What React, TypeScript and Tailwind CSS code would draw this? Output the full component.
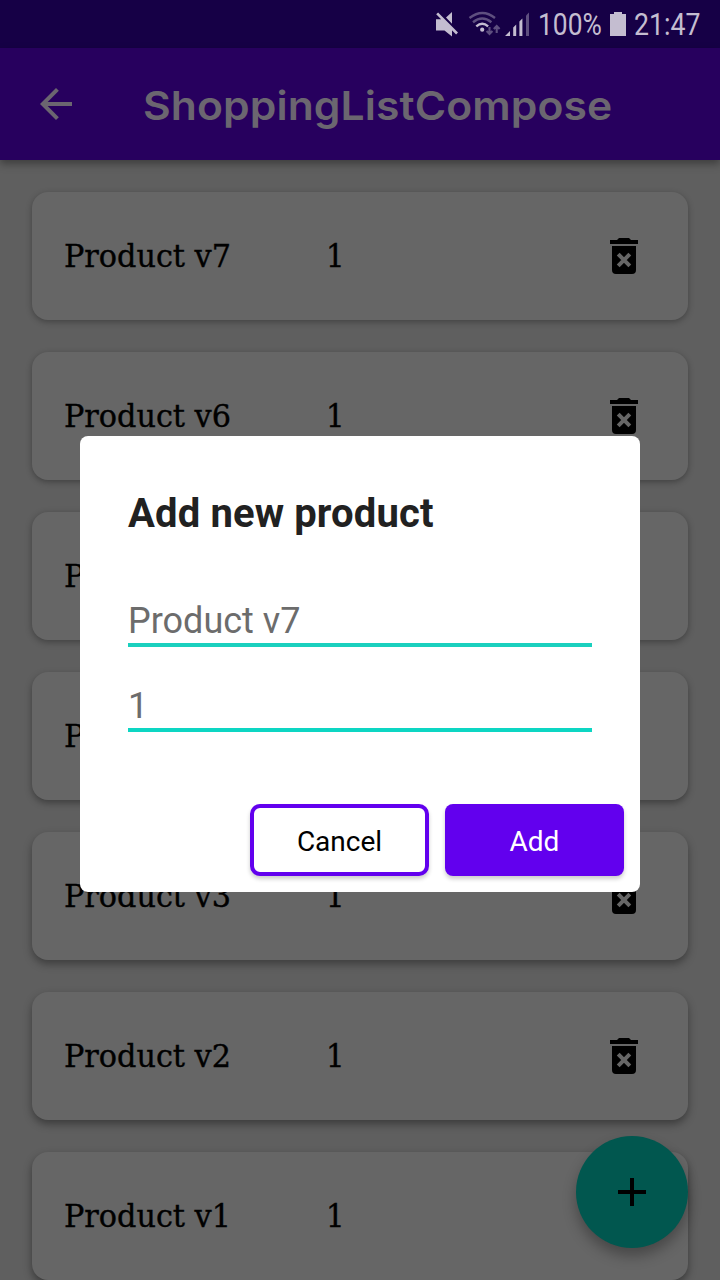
import React from "react";

const products = ["Product v7", "Product v6", "Product v5", "Product v4", "Product v3", "Product v2", "Product v1"];

const cardShadows = [
  "shadow-[0_2px_6px_rgba(0,0,0,0.3)]",
  "shadow-[0_2px_6px_rgba(0,0,0,0.32)]",
  "shadow-[0_2px_7px_rgba(0,0,0,0.33)]",
  "shadow-[0_3px_7px_rgba(0,0,0,0.35)]",
  "shadow-[0_4px_8px_rgba(0,0,0,0.36)]",
  "shadow-[0_4px_8px_rgba(0,0,0,0.38)]",
  "shadow-[0_4px_8px_rgba(0,0,0,0.4)]",
];

function StatusBar() {
  return (
    <div className="flex h-12 shrink-0 items-center bg-[#160046] font-['Roboto',sans-serif] text-[30px] leading-none text-[#c4bdd0]">
      <svg className="ml-[435px] h-12 w-[24px]" viewBox="435 0 24 48" fill="currentColor">
        <path d="M436 19.3h6l10 10v7.2l-7.5-6H436zM446 17.5l6-5.5v11.8zM436.2 14.3l1.9-1.9L458 32.5l-1.9 1.9z" />
      </svg>
      <svg className="ml-[9px] h-12 w-[34px]" viewBox="468 0 34 48" fill="none" stroke="currentColor">
        <g strokeWidth="2.4">
          <path d="M469.5 18q13-10 25.5 0M473 22.3q9.2-7.6 18.4 0" opacity=".42" />
          <path d="M476.3 26.3q6-5 11.8 0" />
        </g>
        <circle cx="482.2" cy="29.7" r="2.1" fill="currentColor" stroke="none" />
        <path d="M489.5 27v7M486.6 31l2.9 3 2.9-3M496.7 33v-7M493.8 29l2.9-3 2.9 3" strokeWidth="2.1" opacity=".42" />
      </svg>
      <svg className="ml-[2px] h-12 w-[26px]" viewBox="504 0 26 48" fill="currentColor">
        <path d="M505 36l5-5v5zM513.2 27.5l3-3V36h-3zM519.4 21.5l3-3V36h-3z" />
        <path d="M526 15.5l3-3V36h-3z" opacity=".42" />
      </svg>
      <div className="ml-[8px] w-[72px] pt-0.5">
        <span className="block w-max origin-left scale-x-[0.88] scale-y-[1.04]">100%</span>
      </div>
      <svg className="h-12 w-4" viewBox="610 0 16 48" fill="currentColor">
        <path d="M614 12h8v2h4v22h-16V14h4z" />
      </svg>
      <div className="ml-[8px] w-[80px] pt-0.5">
        <span className="block w-max origin-left scale-x-[0.89] scale-y-[1.04]">21:47</span>
      </div>
    </div>
  );
}

function DeleteIcon() {
  return (
    <svg className="size-12" viewBox="600 232 48 48">
      <path d="M610 240h7l2-2h10l2 2h7v4h-28zM612 246h24v24q0 4-4 4h-16q-4 0-4-4z" />
      <path d="M618.2 254.2l11.6 11.6M629.8 254.2l-11.6 11.6" stroke="#666" strokeWidth="4" />
    </svg>
  );
}

function ProductCard({ name, shadow }: { name: string; shadow: string }) {
  return (
    <li className={`flex h-32 shrink-0 items-center rounded-2xl bg-[#666] pr-10 pl-8 font-['DejaVu_Serif_Condensed','DejaVu_Serif',serif] text-[32.5px] leading-10 ${shadow}`}>
      <span className="w-[262px] pb-px whitespace-nowrap">
        <span className="block w-max origin-left scale-x-[1.035] [-webkit-text-stroke:0.35px_black]">{name}</span>
      </span>
      <span className="flex-1 pb-px [-webkit-text-stroke:0.35px_black]">1</span>
      <DeleteIcon />
    </li>
  );
}

function AddDialog() {
  return (
    <div className="absolute top-[436px] left-20 flex h-[456px] w-[560px] flex-col rounded-lg bg-white px-12 pt-[54px] font-['Roboto',sans-serif]">
      <h2 className="text-[40px] leading-[48px] font-bold tracking-[0.13px] text-[#212121]">Add new product</h2>
      <div className="mt-[61px] flex h-12 items-center border-b-4 border-[#1ad0be] text-[36px] leading-[44px] text-[#6c6c6c]">Product v7</div>
      <div className="mt-[37px] flex h-12 items-center border-b-4 border-[#0dd6c3] text-[36px] leading-[44px] text-[#6c6c6c]">1</div>
      <div className="-mr-8 mt-[72px] flex justify-end gap-4 text-[28px]">
        <button className="h-[72px] w-[179px] rounded-[10px] border-4 border-[#6200ee] bg-white pt-1 text-black shadow-[0_3px_4px_rgba(0,0,0,0.2)]">Cancel</button>
        <button className="h-[72px] w-[179px] rounded-lg bg-[#6200ee] pt-1 text-white shadow-[0_3px_4px_rgba(0,0,0,0.2)]">Add</button>
      </div>
    </div>
  );
}

export default function App() {
  return (
    <div className="relative flex h-[1280px] w-[720px] flex-col overflow-hidden bg-[#5f5f5f] text-black">
      <StatusBar />
      <header className="z-10 flex h-28 shrink-0 items-center bg-[#27005e] pl-8 text-[#6b6670] shadow-[0_4px_8px_rgba(0,0,0,0.35)]">
        <svg className="size-12" viewBox="0 0 24 24" fill="currentColor">
          <path d="M20 11H7.83l5.59-5.59L12 4l-8 8 8 8 1.41-1.41L7.83 13H20v-2z" />
        </svg>
        <h1 className="ml-[63px] origin-left scale-x-[1.065] pt-1 font-['Inter',sans-serif] text-[40px] leading-[48px] font-semibold tracking-[0.1px]">ShoppingListCompose</h1>
      </header>
      <ul className="flex flex-col gap-8 px-8 pt-8">
        {products.map((name, i) => (
          <ProductCard key={name} name={name} shadow={cardShadows[i]} />
        ))}
      </ul>
      <button aria-label="Add" className="absolute right-8 bottom-8 flex size-28 items-center justify-center rounded-full bg-[#01574f] shadow-[0_8px_14px_rgba(0,0,0,0.3)]">
        <svg className="size-12" viewBox="0 0 24 24"><path d="M19 13h-6v6h-2v-6H5v-2h6V5h2v6h6v2z" /></svg>
      </button>
      <AddDialog />
    </div>
  );
}
